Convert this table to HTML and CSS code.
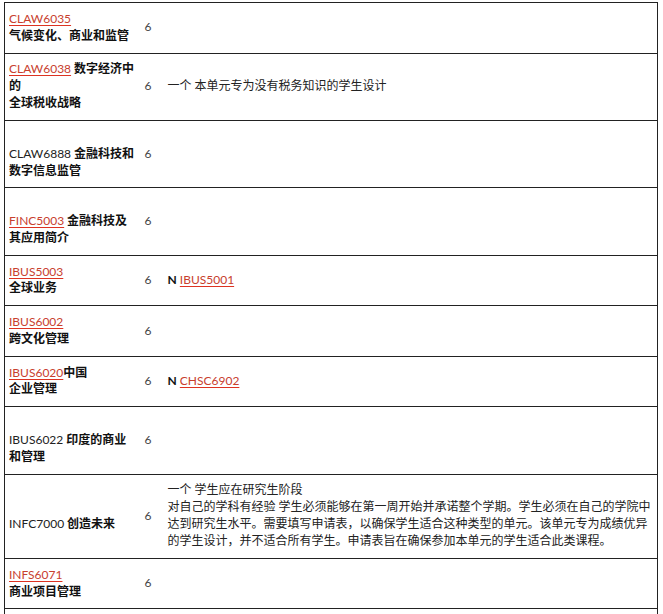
FILE: index.html
```html
<!DOCTYPE html>
<html lang="zh-CN">
<head>
<meta charset="utf-8">
<title>课程列表</title>
<link rel="stylesheet" href="styles.css">
</head>
<body>
<table class="units">
  <colgroup>
    <col class="c-name">
    <col class="c-cp">
    <col class="c-note">
  </colgroup>
  <tbody>
    <tr>
      <td class="name"><a class="code" href="#">CLAW6035</a><br>气候变化、商业和监管</td>
      <td class="cp">6</td>
      <td class="note"></td>
    </tr>
    <tr>
      <td class="name"><a class="code" href="#">CLAW6038</a> 数字经济中的<br>全球税收战略</td>
      <td class="cp">6</td>
      <td class="note">一个 本单元专为没有税务知识的学生设计</td>
    </tr>
    <tr>
      <td class="name"><br><span class="code">CLAW6888</span> 金融科技和数字信息监管</td>
      <td class="cp">6</td>
      <td class="note"></td>
    </tr>
    <tr>
      <td class="name"><br><a class="code" href="#">FINC5003</a> 金融科技及其应用简介</td>
      <td class="cp">6</td>
      <td class="note"></td>
    </tr>
    <tr>
      <td class="name"><a class="code" href="#">IBUS5003</a><br>全球业务</td>
      <td class="cp">6</td>
      <td class="note"><b class="flag">N</b> <a class="code" href="#">IBUS5001</a></td>
    </tr>
    <tr>
      <td class="name"><a class="code" href="#">IBUS6002</a><br>跨文化管理</td>
      <td class="cp">6</td>
      <td class="note"></td>
    </tr>
    <tr>
      <td class="name"><a class="code" href="#">IBUS6020</a>中国<br>企业管理</td>
      <td class="cp">6</td>
      <td class="note"><b class="flag">N</b> <a class="code" href="#">CHSC6902</a></td>
    </tr>
    <tr>
      <td class="name"><br><span class="code">IBUS6022</span> 印度的商业和管理</td>
      <td class="cp">6</td>
      <td class="note"></td>
    </tr>
    <tr>
      <td class="name"><br><span class="code">INFC7000</span> 创造未来</td>
      <td class="cp">6</td>
      <td class="note">一个 学生应在研究生阶段<br>对自己的学科有经验 学生必须能够在第一周开始并承诺整个学期。学生必须在自己的学院中达到研究生水平。需要填写申请表，以确保学生适合这种类型的单元。该单元专为成绩优异的学生设计，并不适合所有学生。申请表旨在确保参加本单元的学生适合此类课程。</td>
    </tr>
    <tr>
      <td class="name"><a class="code" href="#">INFS6071</a><br>商业项目管理</td>
      <td class="cp">6</td>
      <td class="note"></td>
    </tr>
    <tr class="tail">
      <td class="name"></td>
      <td class="cp"></td>
      <td class="note"></td>
    </tr>
  </tbody>
</table>
</body>
</html>
```

FILE: styles.css
```css
html {
  overflow: hidden;
}

body {
  margin: 0;
  background: #ffffff;
  color: #222222;
  font-family: "Lato", "Noto Sans CJK SC", sans-serif;
  font-size: 12px;
  line-height: 16.9px;
}

.units {
  width: 654px;
  margin: 2px 0 0 4px;
  border-collapse: collapse;
  table-layout: fixed;
  border: 1px solid #222222;
}

.c-name { width: 136px; }
.c-cp { width: 23px; }

.units td {
  border-top: 1px solid #222222;
  border-bottom: 1px solid #222222;
  padding: 7.85px 4px;
  vertical-align: middle;
  text-align: left;
}

.name {
  font-weight: 700;
  color: #111111;
}

.name .code {
  font-weight: 400;
}

span.code {
  color: #222222;
}

a.code {
  color: #c8402e;
  text-decoration: underline;
  text-decoration-color: #dd3322;
  text-underline-offset: 2px;
}

.cp {
  color: #444444;
}

.note {
  color: #222222;
}

.flag {
  font-weight: 700;
  color: #111111;
}

.tail td {
  height: 40px;
}
```
